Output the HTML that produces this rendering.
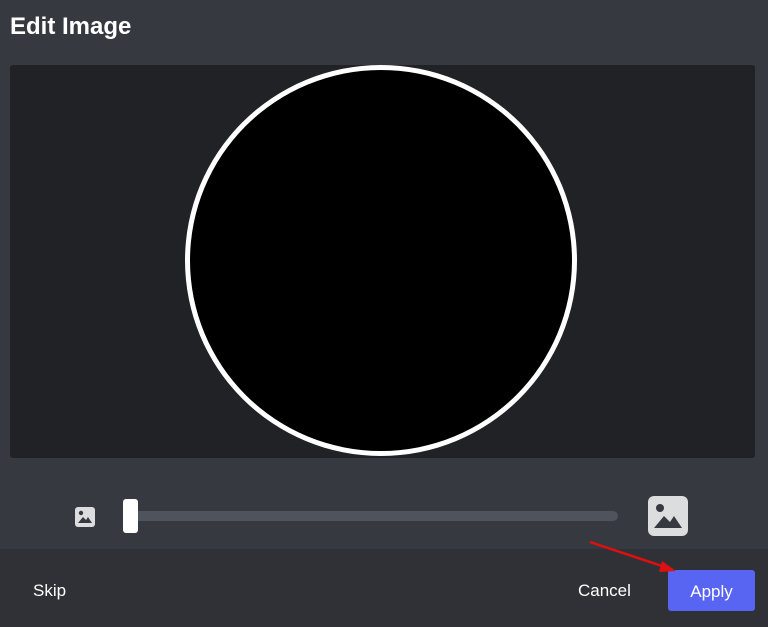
<!DOCTYPE html>
<html><head><style>
body{margin:0;width:768px;height:627px;background:#36393f;font-family:"Liberation Sans",sans-serif;position:relative;overflow:hidden}
.t{position:absolute;left:10px;top:13px;color:#fff;font-size:24px;font-weight:bold}
.crop{position:absolute;left:10px;top:65px;width:745px;height:393px;background:#202225;border-radius:3px}
.c{position:absolute;left:185px;top:65px;width:382px;height:381px;border-radius:50%;background:#000;border:5px solid #fff}
.track{position:absolute;left:130px;top:511px;width:488px;height:10px;background:#4f545c;border-radius:5px}
.h{position:absolute;left:123px;top:499px;width:15px;height:34px;background:#fff;border-radius:3px}
.foot{position:absolute;left:0;top:549px;width:768px;height:78px;background:#2f3136}
.skip{position:absolute;left:33px;top:581px;color:#fff;font-size:17px}
.cancel{position:absolute;left:578px;top:581px;color:#fff;font-size:17px}
.apply{position:absolute;left:668px;top:570px;width:87px;height:41px;background:#5865f2;border-radius:3px;color:#fff;font-size:17px;text-align:center;line-height:43px}
</style></head><body>
<div class="t">Edit Image</div>
<div class="crop"></div>
<div class="c"></div>
<svg style="position:absolute;left:75px;top:507px" width="20" height="20" viewBox="0 0 20 20"><rect x="0" y="0" width="20" height="20" rx="3" fill="#dcddde"/><circle cx="6" cy="6" r="2.2" fill="#36393f"/><path d="M3 16 L8 10 L11 13 L13 10 L17 16Z" fill="#36393f"/></svg>
<div class="track"></div>
<div class="h"></div>
<svg style="position:absolute;left:648px;top:496px" width="40" height="40" viewBox="0 0 20 20"><rect x="0" y="0" width="20" height="20" rx="3" fill="#dcddde"/><circle cx="6" cy="6" r="2" fill="#36393f"/><path d="M3 16 L8 10 L11 13 L13 10 L17 16Z" fill="#36393f"/></svg>
<div class="foot"></div>
<div class="skip">Skip</div>
<div class="cancel">Cancel</div>
<div class="apply">Apply</div>
<svg style="position:absolute;left:0;top:0" width="768" height="627"><line x1="590" y1="542" x2="668" y2="568" stroke="#e01010" stroke-width="2.5"/><path d="M676 571 L662 561 L659 572Z" fill="#e01010"/></svg>
</body></html>
